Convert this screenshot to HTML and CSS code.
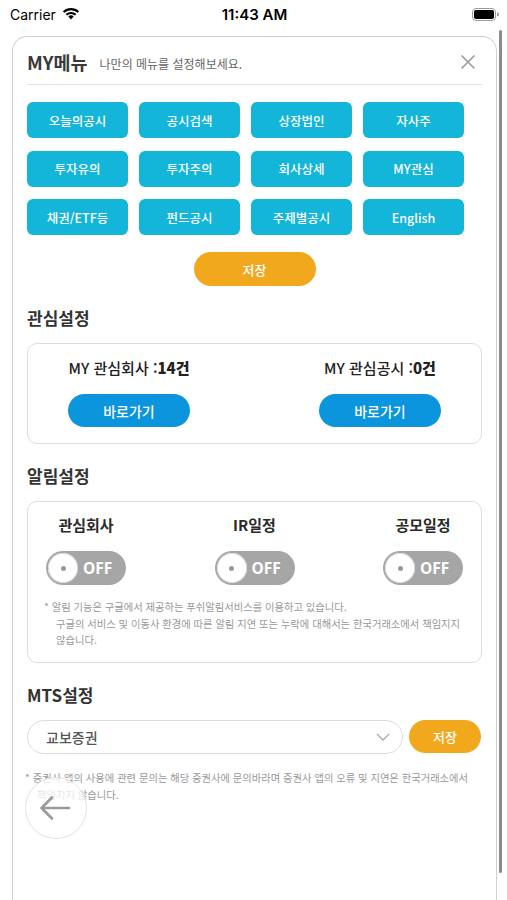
FILE: index.html
```html
<!DOCTYPE html>
<html lang="ko">
<head>
<meta charset="utf-8">
<title>MY메뉴</title>
<link rel="stylesheet" href="styles.css">
</head>
<body>
<div class="statusbar">
  <div class="sb-left">
    <span class="carrier">Carrier</span>
    <svg class="wifi" width="18" height="13" viewBox="0 0 18 13"><path d="M9 12.5 L6.3 9.6 A3.9 3.9 0 0 1 11.7 9.6 Z" fill="#000"/><path d="M3.6 7.1 A7.7 7.7 0 0 1 14.4 7.1 L12.9 8.6 A5.6 5.6 0 0 0 5.1 8.6 Z" fill="#000"/><path d="M0.9 4.3 A11.6 11.6 0 0 1 17.1 4.3 L15.6 5.8 A9.5 9.5 0 0 0 2.4 5.8 Z" fill="#000"/></svg>
  </div>
  <div class="time">11:43 AM</div>
  <div class="sb-right">
    <svg width="27" height="13" viewBox="0 0 27 13"><rect x="0.5" y="0.5" width="23" height="12" rx="3.5" fill="none" stroke="#9a9a9a"/><rect x="2" y="2" width="20" height="9" rx="2" fill="#000"/><path d="M25 4.5 A2 2 0 0 1 25 8.5 Z" fill="#9a9a9a"/></svg>
  </div>
</div>

<div class="card">
  <div class="card-head">
    <h1 class="title">MY메뉴</h1>
    <span class="subtitle">나만의 메뉴를 설정해보세요.</span>
    <svg class="close" width="16" height="16" viewBox="0 0 16 16"><path d="M1.5 1.5 L14.5 14.5 M14.5 1.5 L1.5 14.5" stroke="#9b9b9b" stroke-width="1.6" fill="none"/></svg>
  </div>

  <div class="menu-grid">
    <div class="menu-btn">오늘의공시</div>
    <div class="menu-btn">공시검색</div>
    <div class="menu-btn">상장법인</div>
    <div class="menu-btn">자사주</div>
    <div class="menu-btn">투자유의</div>
    <div class="menu-btn">투자주의</div>
    <div class="menu-btn">회사상세</div>
    <div class="menu-btn">MY관심</div>
    <div class="menu-btn">채권/ETF등</div>
    <div class="menu-btn">펀드공시</div>
    <div class="menu-btn">주제별공시</div>
    <div class="menu-btn">English</div>
  </div>

  <div class="save-row"><button class="save-btn">저장</button></div>

  <h2 class="section-title">관심설정</h2>
  <div class="box interest">
    <div class="interest-col">
      <div class="interest-label">MY 관심회사 :<b>14건</b></div>
      <button class="go-btn">바로가기</button>
    </div>
    <div class="interest-col">
      <div class="interest-label">MY 관심공시 :<b>0건</b></div>
      <button class="go-btn">바로가기</button>
    </div>
  </div>

  <h2 class="section-title">알림설정</h2>
  <div class="box alarm">
    <div class="alarm-row">
      <div class="alarm-col">
        <div class="alarm-label">관심회사</div>
        <div class="toggle"><span class="knob"></span><span class="toggle-text">OFF</span></div>
      </div>
      <div class="alarm-col">
        <div class="alarm-label">IR일정</div>
        <div class="toggle"><span class="knob"></span><span class="toggle-text">OFF</span></div>
      </div>
      <div class="alarm-col">
        <div class="alarm-label">공모일정</div>
        <div class="toggle"><span class="knob"></span><span class="toggle-text">OFF</span></div>
      </div>
    </div>
    <p class="note alarm-note">* 알림 기능은 구글에서 제공하는 푸쉬알림서비스를 이용하고 있습니다.<br>구글의 서비스 및 이동사 환경에 따른 알림 지연 또는 누락에 대해서는 한국거래소에서 책임지지<br>않습니다.</p>
  </div>

  <h2 class="section-title">MTS설정</h2>
  <div class="mts-row">
    <div class="select">
      <span class="select-text">교보증권</span>
      <svg class="chev" width="14" height="8" viewBox="0 0 14 8"><path d="M1 1 L7 7 L13 1" stroke="#a8a8a8" stroke-width="1.3" fill="none"/></svg>
    </div>
    <button class="mts-save">저장</button>
  </div>
  <p class="note mts-note">* 증권사 앱의 사용에 관련 문의는 해당 증권사에 문의바라며 증권사 앱의 오류 및 지연은 한국거래소에서<br>책임지지 않습니다.</p>
</div>

<div class="scrollbar"></div>
<button class="back-btn" aria-label="뒤로">
  <svg width="32" height="26" viewBox="0 0 32 26"><path d="M30 13 H3 M13 2.5 L2.5 13 L13 23.5" stroke="#9a9a9a" stroke-width="2.6" fill="none" stroke-linecap="round" stroke-linejoin="round"/></svg>
</button>
</body>
</html>
```

FILE: styles.css
```css
* { box-sizing: border-box; }
html, body { margin: 0; padding: 0; }
body {
  width: 507px;
  height: 900px;
  overflow: hidden;
  background: #fff;
  font-family: "Noto Sans CJK KR", "Noto Sans", sans-serif;
  color: #333;
  position: relative;
}
button { font-family: inherit; border: none; cursor: pointer; padding: 0; }

.statusbar {
  height: 30px;
  display: flex;
  align-items: center;
  justify-content: space-between;
  padding: 0 8px 2px 10px;
  font-family: "Inter", "Liberation Sans", sans-serif;
  color: #000;
}
.sb-left { display: flex; align-items: center; gap: 6px; width: 120px; }
.carrier { font-size: 14px; }
.wifi { margin-top: -1px; }
.time { font-size: 15px; font-weight: 600; }
.sb-right { width: 120px; display: flex; justify-content: flex-end; }

.card {
  margin: 6px 0 0 12px;
  width: 485px;
  height: 900px;
  border: 1px solid #cfcfcf;
  border-bottom: none;
  border-radius: 15px 15px 0 0;
  padding: 0 14px;
}
.card-head {
  height: 48px;
  display: flex;
  align-items: center;
  border-bottom: 1px solid #e4e4e4;
  padding-top: 2px;
}
.title { margin: 0; font-size: 18.5px; font-weight: 700; color: #3a3a3a; }
.subtitle { margin-left: 12px; font-size: 12px; color: #666; padding-top: 3px; }
.close { margin-left: auto; margin-right: 6px; }

.menu-grid {
  margin-top: 17px;
  display: grid;
  grid-template-columns: repeat(4, 101px);
  grid-auto-rows: 36px;
  column-gap: 11px;
  row-gap: 12.5px;
}
.menu-btn {
  background: #13b5d8;
  border-radius: 6px;
  color: #fff;
  font-size: 12.5px;
  font-weight: 500;
  display: flex;
  align-items: center;
  justify-content: center;
}

.save-row { display: flex; justify-content: center; margin-top: 17px; }
.save-btn {
  width: 122px;
  height: 34px;
  border-radius: 17px;
  background: #f2a81d;
  color: #fff;
  font-size: 13px;
  font-weight: 500;
}

.section-title {
  margin: 20px 0 13px;
  font-size: 17px;
  line-height: 24px;
  font-weight: 700;
  color: #333;
}
.box {
  border: 1px solid #dedede;
  border-radius: 10px;
}
.interest {
  height: 101px;
  display: flex;
  justify-content: space-between;
  padding: 14px 40px 0;
}
.interest-col { display: flex; flex-direction: column; align-items: center; width: 122px; }
.interest-label { font-size: 15px; line-height: 20px; font-weight: 500; color: #222; white-space: nowrap; }
.interest-label b { font-weight: 900; }
.go-btn {
  margin-top: 16px;
  width: 122px;
  height: 33px;
  border-radius: 17px;
  background: #0a95dc;
  color: #fff;
  font-size: 14px;
  font-weight: 500;
}

.alarm { height: 162px; padding: 13px 18px 0 16px; }
.alarm-row { display: flex; justify-content: space-between; padding-left: 2px; }
.alarm-col { display: flex; flex-direction: column; align-items: center; width: 80px; }
.alarm-label { font-size: 15px; line-height: 20px; font-weight: 700; color: #2a2a2a; }
.toggle {
  margin-top: 16px;
  width: 80px;
  height: 34px;
  border-radius: 17px;
  background: #a6a6a6;
  display: flex;
  align-items: center;
  padding-left: 2px;
}
.knob {
  width: 30px;
  height: 30px;
  border-radius: 50%;
  background: #fff;
  box-shadow: inset 0 0 0 1px #d8d8d8;
  position: relative;
  flex: none;
}
.knob::after {
  content: "";
  position: absolute;
  left: 12.5px;
  top: 12.5px;
  width: 5px;
  height: 5px;
  border-radius: 50%;
  background: #9a9a9a;
}
.toggle-text { margin-left: 5px; color: #fff; font-size: 15.5px; font-weight: 700; font-family: "Noto Sans", "Liberation Sans", sans-serif; }

.note {
  margin: 0;
  font-size: 10.3px;
  line-height: 16.5px;
  color: #999;
  white-space: nowrap;
  padding-left: 12px;
  text-indent: -12px;
}
.alarm-note { margin-top: 14px; }

.mts-row { display: flex; gap: 6px; }
.select {
  width: 376px;
  height: 34px;
  border: 1px solid #dcdcdc;
  border-radius: 17px;
  display: flex;
  align-items: center;
  padding: 0 12px 0 18px;
}
.select-text { font-size: 14px; color: #555; font-weight: 500; }
.chev { margin-left: auto; }
.mts-save {
  width: 72px;
  height: 33px;
  border-radius: 17px;
  background: #f2a81d;
  color: #fff;
  font-size: 13px;
  font-weight: 500;
}
.mts-note { margin: 16px 0 0 -2px; }

.scrollbar {
  position: absolute;
  left: 499px;
  top: 30px;
  width: 3px;
  height: 843px;
  border-radius: 2px;
  background: #8c8c8c;
}
.back-btn {
  position: absolute;
  left: 25px;
  top: 777px;
  width: 62px;
  height: 62px;
  border-radius: 50%;
  background: rgba(255,255,255,0.75);
  border: 1px solid #e2e2e2;
  display: flex;
  align-items: center;
  justify-content: center;
}
.back-btn svg { margin-left: -2px; }
```
